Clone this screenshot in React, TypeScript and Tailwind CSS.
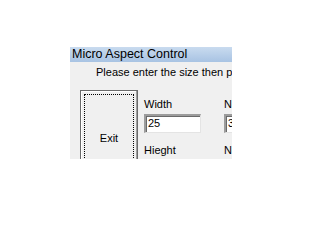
const inputCls =
  "w-[57px] h-[19px] bg-white border-t-2 border-l-2 border-b border-r border-t-[#9c9c9c] border-l-[#9c9c9c] border-b-[#e4e4e4] border-r-[#e4e4e4] shadow-[inset_1px_1px_0_#6a6a6a] px-[2px] text-[11px] leading-[15px] text-black";

const Field = ({ label, value }: { label: string; value?: string }) => (
  <div className="flex flex-col">
    <span className="text-[11px] leading-[13px] whitespace-nowrap">{label}</span>
    {value !== undefined && <div className={`mt-[3px] ${inputCls}`}>{value}</div>}
  </div>
);

export default function App() {
  return (
    <div
      className="w-[300px] h-[206px] bg-white overflow-hidden pl-[70px] pt-[47px]"
      style={{ fontFamily: '"Liberation Sans", Arial, sans-serif' }}
    >
      <div className="w-[162px] h-[112px] overflow-hidden flex flex-col bg-[#f0f0f0]">
        <div className="h-[15px] shrink-0 bg-gradient-to-b from-[#c9dbef] to-[#a8c3e3] pl-[2px] text-[12.5px] leading-[15px] text-black whitespace-nowrap">
          Micro Aspect Control
        </div>
        <div className="pt-[4px] pl-[26px] text-[11px] leading-[13px] whitespace-nowrap text-black">
          Please enter the size then press OK
        </div>
        <div className="flex pl-[10px] pt-[11px] text-black">
          <div className="shrink-0 w-[58px] h-[96px] bg-[#f0f0f0] border border-[#6a6a6a] shadow-[inset_-1px_-1px_0_#a0a0a0,inset_1px_1px_0_#ffffff] p-[3px]">
            <div className="h-full border border-dotted border-black flex items-center justify-center text-[11px]">
              Exit
            </div>
          </div>
          <div className="flex ml-[6px] gap-[23px] pt-[8px]">
            <div className="flex flex-col gap-[11px]">
              <Field label="Width" value="25" />
              <Field label="Hieght" />
            </div>
            <div className="flex flex-col gap-[11px]">
              <Field label="New Width" value="30" />
              <Field label="New Hieght" />
            </div>
          </div>
        </div>
      </div>
    </div>
  );
}
